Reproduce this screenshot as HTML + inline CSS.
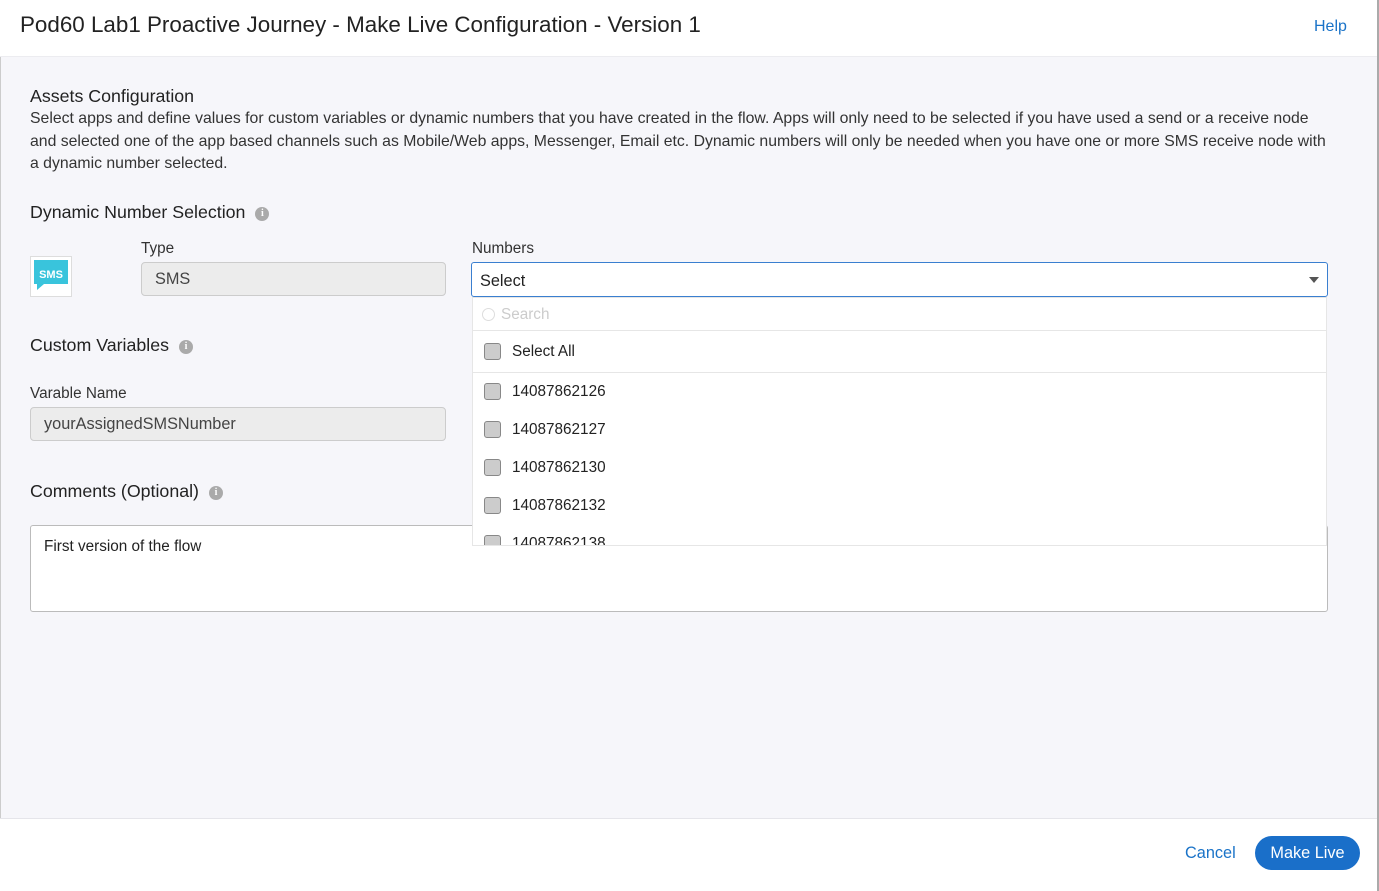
<!DOCTYPE html><html><head><style>
*{box-sizing:border-box;margin:0;padding:0}
body{width:1379px;height:891px;background:#f6f6fa;font-family:"Liberation Sans",sans-serif;color:#222;position:relative;overflow:hidden}
.a{position:absolute}
.hdr{left:0;top:0;width:1379px;height:57px;background:#fff;border-bottom:1px solid #ececf0}
.ftr{left:0;top:818px;width:1379px;height:73px;background:#fff;border-top:1px solid #e5e5ea}
.rb{left:1377px;top:0;width:2px;height:891px;background:#aaa}
.lb{left:0;top:57px;width:1px;height:834px;background:#ccc}
.h2{font-size:17.8px;color:#222}
.i{display:inline-block;width:14px;height:14px;border-radius:50%;background:#aaa;color:#fff;font-size:10px;text-align:center;line-height:14px;font-weight:bold;vertical-align:2px;margin-left:10px;font-family:"Liberation Serif",serif}
.lbl{font-size:15.3px;color:#333}
.inp{background:#ececec;border:1px solid #ccc;border-radius:4px;font-size:16.3px;color:#444;padding-left:13px;line-height:33px}
.cb{position:absolute;left:11px;width:17px;height:17px;border:1px solid #888;border-radius:3px;background:#ccc}
.row{position:absolute;left:0;width:855px;font-size:15.3px}
.row span{position:absolute;left:39px}
</style></head><body>
<div class="a hdr"></div>
<div class="a" style="left:20px;top:12px;font-size:22.4px;color:#222">Pod60 Lab1 Proactive Journey - Make Live Configuration - Version 1</div>
<div class="a" style="left:1314px;top:18px;font-size:16px;color:#1a73c8">Help</div>
<div class="a lb"></div>
<div class="a h2" style="left:30px;top:86px">Assets Configuration</div>
<div class="a" style="left:30px;top:108px;width:1302px;font-size:15.8px;line-height:22.5px;color:#333">Select apps and define values for custom variables or dynamic numbers that you have created in the flow. Apps will only need to be selected if you have used a send or a receive node and selected one of the app based channels such as Mobile/Web apps, Messenger, Email etc. Dynamic numbers will only be needed when you have one or more SMS receive node with a dynamic number selected.</div>
<div class="a h2" style="left:30px;top:202px">Dynamic Number Selection<span class="i">i</span></div>
<div class="a" style="left:30px;top:256px;width:42px;height:41px;border:1px solid #ddd;background:#fff">
<svg width="40" height="39" viewBox="0 0 40 39"><path d="M3 3h34v24H13l-7 6v-6H3z" fill="#39c4dc"/><text x="20" y="21" font-size="11" font-weight="bold" fill="#fff" text-anchor="middle" font-family="Liberation Sans">SMS</text></svg></div>
<div class="a lbl" style="left:141px;top:240px">Type</div>
<div class="a inp" style="left:141px;top:262px;width:305px;height:34px">SMS</div>
<div class="a lbl" style="left:472px;top:240px">Numbers</div>
<div class="a" style="left:471px;top:262px;width:857px;height:35px;background:#fff;border:1.5px solid #3a7fd0;border-radius:3px;font-size:16.3px;padding:9px 8px">Select<div class="a" style="right:8px;top:14px;width:0;height:0;border:5px solid transparent;border-top:6px solid #555;border-bottom:0"></div></div>
<div class="a h2" style="left:30px;top:335px">Custom Variables<span class="i">i</span></div>
<div class="a lbl" style="left:30px;top:385px">Varable Name</div>
<div class="a inp" style="left:30px;top:407px;width:416px;height:34px">yourAssignedSMSNumber</div>
<div class="a h2" style="left:30px;top:481px">Comments (Optional)<span class="i">i</span></div>
<div class="a" style="left:30px;top:525px;width:1298px;height:87px;background:#fff;border:1px solid #bbb;border-radius:3px;font-size:15.3px;padding:12px 13px">First version of the flow</div>
<div class="a" style="left:472px;top:297px;width:855px;height:249px;background:#fff;border:1px solid #e6e6e6;overflow:hidden">
<div class="row" style="top:0;height:33px;border-bottom:1px solid #e6e6e6"><div class="a" style="left:9px;top:10px;width:13px;height:13px;border:1px solid #ddd;border-radius:50%"></div><span style="left:28px;top:8px;color:#ccc">Search</span></div>
<div class="row" style="top:33px;height:42px;border-bottom:1px solid #e6e6e6"><div class="cb" style="top:12px"></div><span style="top:12px">Select All</span></div>
<div class="row" style="top:76px"><div class="cb" style="top:9px"></div><span style="top:9px">14087862126</span></div>
<div class="row" style="top:114px"><div class="cb" style="top:9px"></div><span style="top:9px">14087862127</span></div>
<div class="row" style="top:152px"><div class="cb" style="top:9px"></div><span style="top:9px">14087862130</span></div>
<div class="row" style="top:190px"><div class="cb" style="top:9px"></div><span style="top:9px">14087862132</span></div>
<div class="row" style="top:228px"><div class="cb" style="top:9px"></div><span style="top:9px">14087862138</span></div>
</div>
<div class="a ftr"></div>
<div class="a" style="left:1185px;top:844px;font-size:16.3px;color:#1a73c8">Cancel</div>
<div class="a" style="left:1255px;top:836px;width:105px;height:34px;border-radius:17px;background:#1a6fc9;color:#fff;font-size:16.3px;text-align:center;line-height:34px">Make Live</div>
<div class="a rb"></div>
</body></html>
